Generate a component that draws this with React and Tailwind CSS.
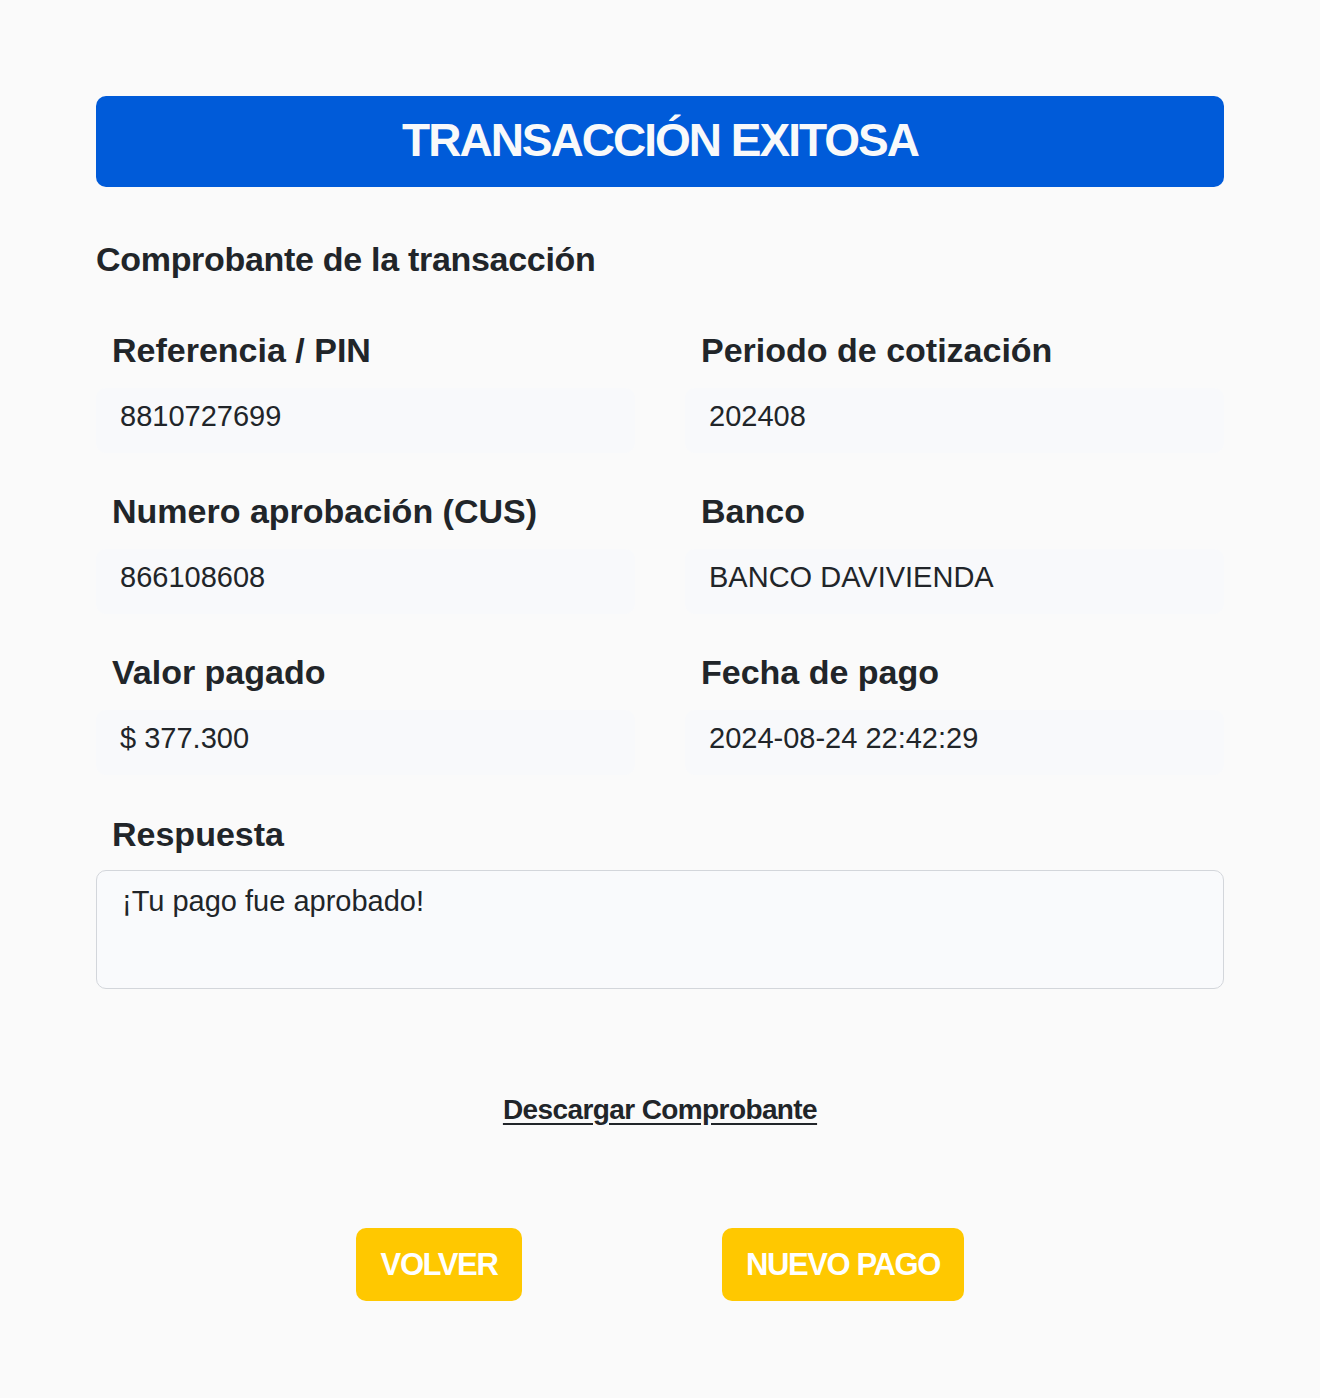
import React from 'react';

const fields = [
  { label: 'Referencia / PIN', value: '8810727699' },
  { label: 'Periodo de cotización', value: '202408' },
  { label: 'Numero aprobación (CUS)', value: '866108608' },
  { label: 'Banco', value: 'BANCO DAVIVIENDA' },
  { label: 'Valor pagado', value: '$ 377.300' },
  { label: 'Fecha de pago', value: '2024-08-24 22:42:29' },
];

const Field = ({ label, value }) => (
  <div>
    <h3 className="px-4 text-[34px] font-bold leading-[40px] text-[#212529]">{label}</h3>
    <div className="mt-[18px] h-[65px] rounded-[10px] bg-[#f8f9fb] px-6 pt-[11px] text-[29px] leading-[35px] text-[#212529]">
      {value}
    </div>
  </div>
);

const App = () => {
  return (
    <div className="min-h-[1398px] bg-[#fafafa] font-['Liberation_Sans',Arial,sans-serif] text-[#212529]">
      <div className="mx-auto w-[1128px] pt-[96px]">
        <div className="h-[91px] rounded-[10px] bg-[#005bd9] flex items-center justify-center pb-[3px]">
          <h1 className="text-[46px] font-bold tracking-[-2px] text-[#f8f9fa]">TRANSACCIÓN EXITOSA</h1>
        </div>

        <h2 className="mt-[50px] text-[34px] font-bold tracking-[-0.3px] leading-[44px]">Comprobante de la transacción</h2>

        <div className="mt-[49px] grid grid-cols-2 gap-x-[50px] gap-y-[38px]">
          {fields.map(f => (
            <Field key={f.label} label={f.label} value={f.value} />
          ))}
        </div>

        <h3 className="mt-[39px] px-4 text-[34px] font-bold leading-[40px]">Respuesta</h3>
        <div className="mt-[16px] h-[119px] rounded-[10px] border border-[#d3d6db] bg-[#f9fafc] px-[25px] pt-[13px] text-[29px] leading-[35px]">
          ¡Tu pago fue aprobado!
        </div>

        <div className="mt-[100px] flex justify-center">
          <a href="#" className="text-[28px] font-bold tracking-[-0.6px] underline underline-offset-4 text-[#212529]">
            Descargar Comprobante
          </a>
        </div>

        <div className="mt-[97px] flex justify-center gap-[200px]">
          <button className="h-[73px] w-[166px] rounded-[10px] bg-[#ffc800] pt-[2px] text-[31px] font-bold tracking-[-1.4px] text-white">VOLVER</button>
          <button className="h-[73px] w-[242px] rounded-[10px] bg-[#ffc800] pt-[2px] text-[31px] font-bold tracking-[-1.4px] text-white">NUEVO PAGO</button>
        </div>
      </div>
    </div>
  );
};

export default App;
